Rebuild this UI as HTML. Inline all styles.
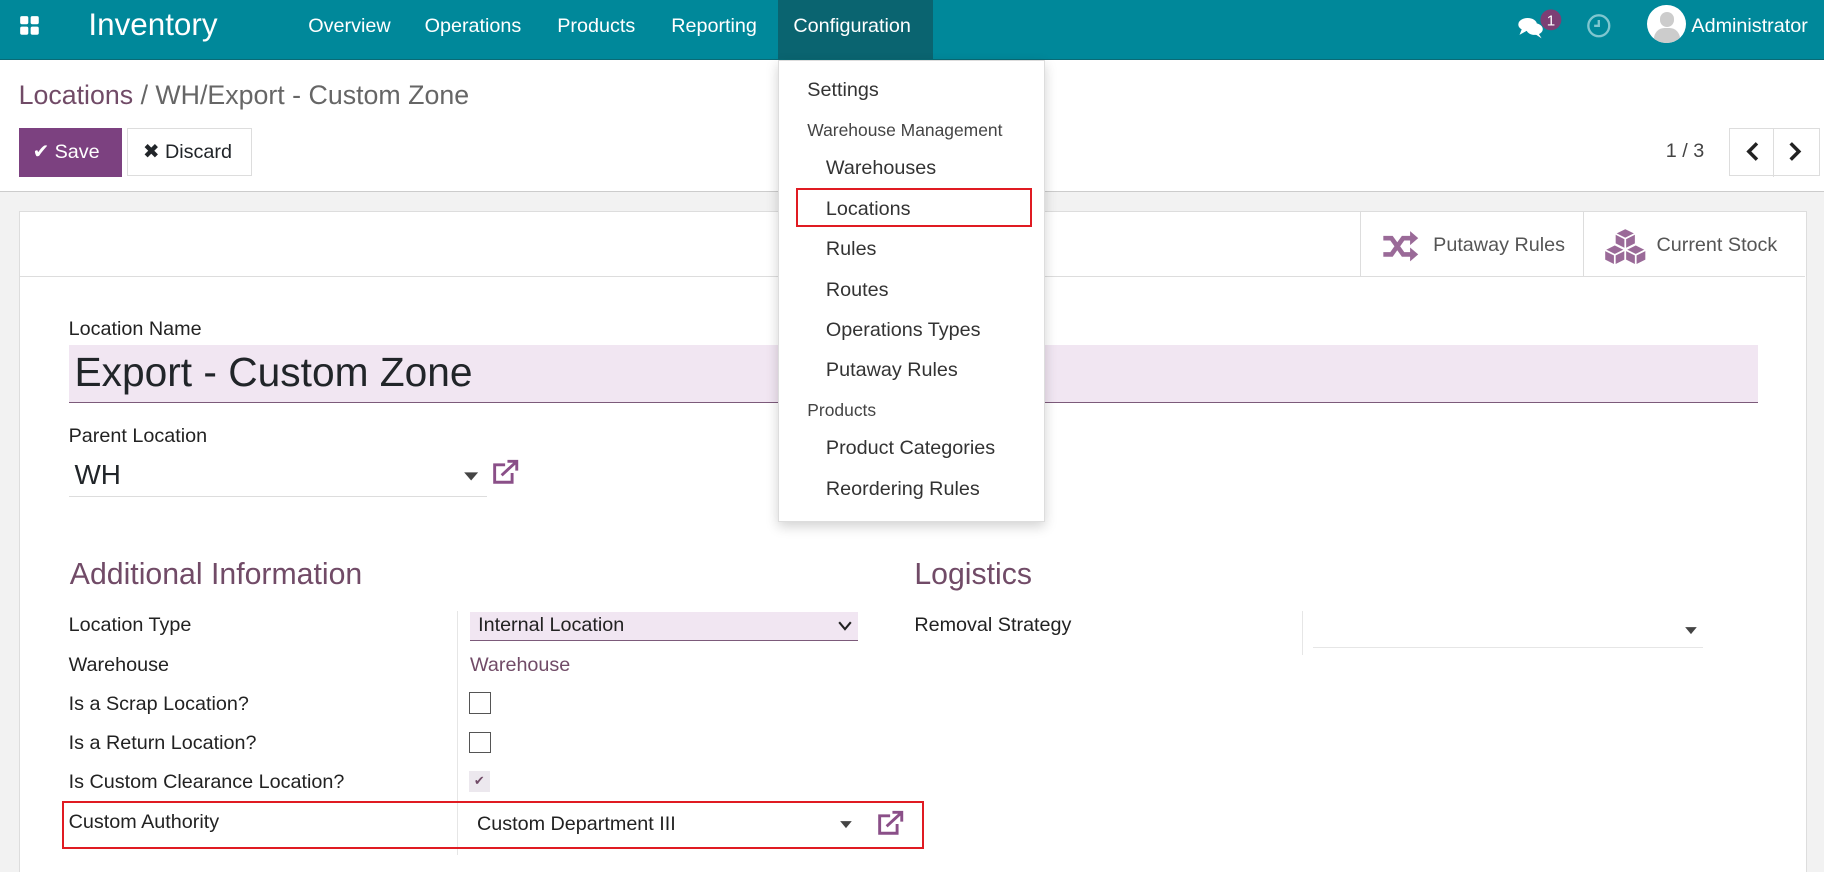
<!DOCTYPE html>
<html><head><meta charset="utf-8"><style>
html,body{margin:0;padding:0;width:1824px;height:872px;overflow:hidden;background:#fff}
#w{zoom:1.16327;width:1568px;height:750px;position:relative;font-family:"Liberation Sans",sans-serif;color:#212529;overflow:hidden}
.a{position:absolute;white-space:nowrap}
.nav{left:0;top:0;width:1568px;height:51px;background:#00889a;border-bottom:1px solid #0a6a75}
.nav .a{color:#fff;font-size:17px;top:13px}
.conf{left:669px;top:0;width:133px;height:51px;background:#0a6470}
.menu{left:669px;top:52px;width:228px;height:395px;background:#fff;border:1px solid #ddd;box-shadow:0 4px 10px rgba(0,0,0,.18)}
.menu .a{font-size:17px;color:#333}
.menu .h{font-size:15px;color:#444}
.lbl{font-size:17px;color:#222}
.purple{color:#714b67}
.chk{width:17px;height:17px;border:1px solid #555;background:#fff}
</style></head><body><div id="w">
<div class="a nav"></div>
<div class="a conf"></div>
<svg class="a" style="left:16px;top:13px" width="18" height="18"><rect x="1" y="1" width="7" height="7" rx="1.5" fill="#fff"/><rect x="10" y="1" width="7" height="7" rx="1.5" fill="#fff"/><rect x="1" y="10" width="7" height="7" rx="1.5" fill="#fff"/><rect x="10" y="10" width="7" height="7" rx="1.5" fill="#fff"/></svg>
<div class="nav a" style="background:none;border:none;height:0">
<div class="a" style="left:76px;top:6px;font-size:27px">Inventory</div>
<div class="a" style="left:265px">Overview</div>
<div class="a" style="left:365px">Operations</div>
<div class="a" style="left:479px">Products</div>
<div class="a" style="left:577px">Reporting</div>
<div class="a" style="left:682px">Configuration</div>
<div class="a" style="left:1454px">Administrator</div>
</div>
<svg class="a" style="left:1303px;top:6px" width="40" height="30"><ellipse cx="10" cy="15" rx="8" ry="5.5" fill="#fff"/><ellipse cx="16" cy="19" rx="7" ry="5" fill="#fff"/><path d="M5 19 L3 24 L10 20Z M19 22 L22 27 L16 23Z" fill="#fff"/><circle cx="30" cy="11" r="9" fill="#7c3f75"/><text x="30" y="16" fill="#fff" font-size="13" text-anchor="middle" font-family="Liberation Sans">1</text></svg>
<svg class="a" style="left:1363px;top:11px" width="22" height="22"><circle cx="11" cy="11" r="9" fill="none" stroke="#7fc6cf" stroke-width="2"/><path d="M11 6v5h-4" fill="none" stroke="#7fc6cf" stroke-width="2"/></svg>
<div class="a" style="left:1416px;top:4px;width:33px;height:33px;border-radius:50%;background:#fff;overflow:hidden"><div class="a" style="left:11px;top:6px;width:12px;height:13px;border-radius:6px;background:#ccc"></div><div class="a" style="left:6px;top:20px;width:22px;height:18px;border-radius:9px;background:#ccc"></div></div>

<div class="a purple" style="left:16px;top:69px;font-size:23px">Locations <span style="color:#666">/ WH/Export - Custom Zone</span></div>
<div class="a" style="left:16px;top:110px;width:89px;height:42px;background:#7c4180;color:#fff;font-size:17px;line-height:42px;text-indent:12px">✔ Save</div>
<div class="a" style="left:109px;top:110px;width:106px;height:40px;border:1px solid #ddd;font-size:17px;line-height:40px;text-indent:13px">✖ Discard</div>
<div class="a" style="left:1432px;top:120px;font-size:17px;color:#444">1 / 3</div>
<div class="a" style="left:1486px;top:110px;width:77px;height:40px;border:1px solid #ddd"></div>
<div class="a" style="left:1524px;top:110px;width:1px;height:42px;background:#ddd"></div>
<svg class="a" style="left:1498px;top:121px" width="60" height="18"><path d="M12 2 L5 9 L12 16" fill="none" stroke="#222" stroke-width="3"/><path d="M41 2 L48 9 L41 16" fill="none" stroke="#222" stroke-width="3"/></svg>

<div class="a" style="left:0;top:164px;width:1568px;height:600px;background:#f2f2f2;border-top:1px solid #ccc"></div>
<div class="a" style="left:16px;top:181px;width:1536px;height:580px;background:#fff;border:1px solid #ddd"></div>
<div class="a" style="left:17px;top:237px;width:1535px;height:1px;background:#ddd"></div>
<div class="a" style="left:1169px;top:182px;width:1px;height:55px;background:#ddd"></div>
<div class="a" style="left:1361px;top:182px;width:1px;height:55px;background:#ddd"></div>
<svg class="a" style="left:1187px;top:198px" width="34" height="28"><path d="M2 7h7l10 14h7M2 21h7l10-14h7" fill="none" stroke="#9a6a98" stroke-width="4"/><path d="M25 1l7 6-7 6zM25 15l7 6-7 6z" fill="#9a6a98"/></svg>
<div class="a" style="left:1232px;top:201px;font-size:17px;color:#555">Putaway Rules</div>
<svg class="a" style="left:1377px;top:195px" width="40" height="36"><g fill="#9a6a98" stroke="#fff" stroke-width="1.5" stroke-linejoin="round"><path d="M20 1l9 4.5v9L20 19l-9-4.5v-9z"/><path d="M11 15l9 4.5v9L11 33l-9-4.5v-9z"/><path d="M29 15l9 4.5v9L29 33l-9-4.5v-9z"/></g><g fill="none" stroke="#fff" stroke-width="1.5"><path d="M11 5.5l9 4.5 9-4.5M20 10v9M2 19.5l9 4.5 9-4.5M11 24v9M20 19.5l9 4.5 9-4.5M29 24v9"/></g></svg>
<div class="a" style="left:1424px;top:201px;font-size:17px;color:#555">Current Stock</div>

<div class="a lbl" style="left:59px;top:273px;font-weight:normal">Location Name</div>
<div class="a" style="left:59px;top:297px;width:1452px;height:49px;background:#f1e6f2;border-bottom:1px solid #7c5a7a"></div>
<div class="a" style="left:64px;top:300px;font-size:35px">Export - Custom Zone</div>
<div class="a lbl" style="left:59px;top:365px">Parent Location</div>
<div class="a" style="left:64px;top:395px;font-size:24px">WH</div>
<div class="a" style="left:59px;top:426px;width:360px;height:1px;background:#ddd"></div>
<svg class="a" style="left:398px;top:404px" width="14" height="10"><path d="M1 2h12l-6 7z" fill="#444"/></svg>
<svg class="a" style="left:421px;top:395px" width="26" height="24"><path d="M13 5H4v15h15v-8" fill="none" stroke="#8a4f88" stroke-width="2.5"/><path d="M10 14L22 3M15 2h8v8" fill="none" stroke="#8a4f88" stroke-width="2.5"/></svg>

<div class="a purple" style="left:60px;top:480px;font-size:26px">Additional Information</div>
<div class="a purple" style="left:786px;top:480px;font-size:26px">Logistics</div>
<div class="a" style="left:393px;top:525px;width:1px;height:210px;background:#e6e6e6"></div>
<div class="a lbl" style="left:59px;top:528px">Location Type</div>
<div class="a lbl" style="left:59px;top:562px">Warehouse</div>
<div class="a lbl" style="left:59px;top:596px">Is a Scrap Location?</div>
<div class="a lbl" style="left:59px;top:629px">Is a Return Location?</div>
<div class="a lbl" style="left:59px;top:663px">Is Custom Clearance Location?</div>
<div class="a lbl" style="left:59px;top:697px">Custom Authority</div>
<div class="a" style="left:404px;top:526px;width:334px;height:24px;background:#f1e6f2;border-bottom:1px solid #7c5a7a"></div>
<div class="a lbl" style="left:411px;top:528px">Internal Location</div>
<svg class="a" style="left:720px;top:534px" width="12" height="9"><path d="M1 1l5 6 5-6" fill="none" stroke="#222" stroke-width="1.8"/></svg>
<div class="a purple" style="left:404px;top:562px;font-size:17px">Warehouse</div>
<div class="a chk" style="left:403px;top:595px"></div>
<div class="a chk" style="left:403px;top:629px"></div>
<div class="a" style="left:403px;top:663px;width:18px;height:18px;background:#ece8ee;color:#714b67;font-size:11px;text-align:center;line-height:18px">✔</div>
<div class="a lbl" style="left:410px;top:699px">Custom Department III</div>
<svg class="a" style="left:721px;top:705px" width="12" height="9"><path d="M1 1h10l-5 6z" fill="#444"/></svg>
<svg class="a" style="left:752px;top:696px" width="26" height="24"><path d="M13 5H4v15h15v-8" fill="none" stroke="#8a4f88" stroke-width="2.5"/><path d="M10 14L22 3M15 2h8v8" fill="none" stroke="#8a4f88" stroke-width="2.5"/></svg>
<div class="a" style="left:53px;top:689px;width:738px;height:37px;border:2px solid #e01b22"></div>

<div class="a lbl" style="left:786px;top:528px">Removal Strategy</div>
<div class="a" style="left:1119px;top:525px;width:1px;height:38px;background:#e6e6e6"></div>
<div class="a" style="left:1129px;top:556px;width:335px;height:1px;background:#e6e6e6"></div>
<svg class="a" style="left:1448px;top:538px" width="12" height="9"><path d="M1 1h10l-5 6z" fill="#444"/></svg>

<div class="a menu"></div>
<div class="menu a" style="background:none;border:none;box-shadow:none">
<div class="a" style="left:25px;top:16px">Settings</div>
<div class="a h" style="left:25px;top:51px">Warehouse Management</div>
<div class="a" style="left:41px;top:83px">Warehouses</div>
<div class="a" style="left:41px;top:118px">Locations</div>
<div class="a" style="left:41px;top:153px">Rules</div>
<div class="a" style="left:41px;top:188px">Routes</div>
<div class="a" style="left:41px;top:222px">Operations Types</div>
<div class="a" style="left:41px;top:257px">Putaway Rules</div>
<div class="a h" style="left:25px;top:292px">Products</div>
<div class="a" style="left:41px;top:324px">Product Categories</div>
<div class="a" style="left:41px;top:359px">Reordering Rules</div>
</div>
<div class="a" style="left:684px;top:162px;width:200px;height:30px;border:2px solid #e01b22"></div>
</div></body></html>
